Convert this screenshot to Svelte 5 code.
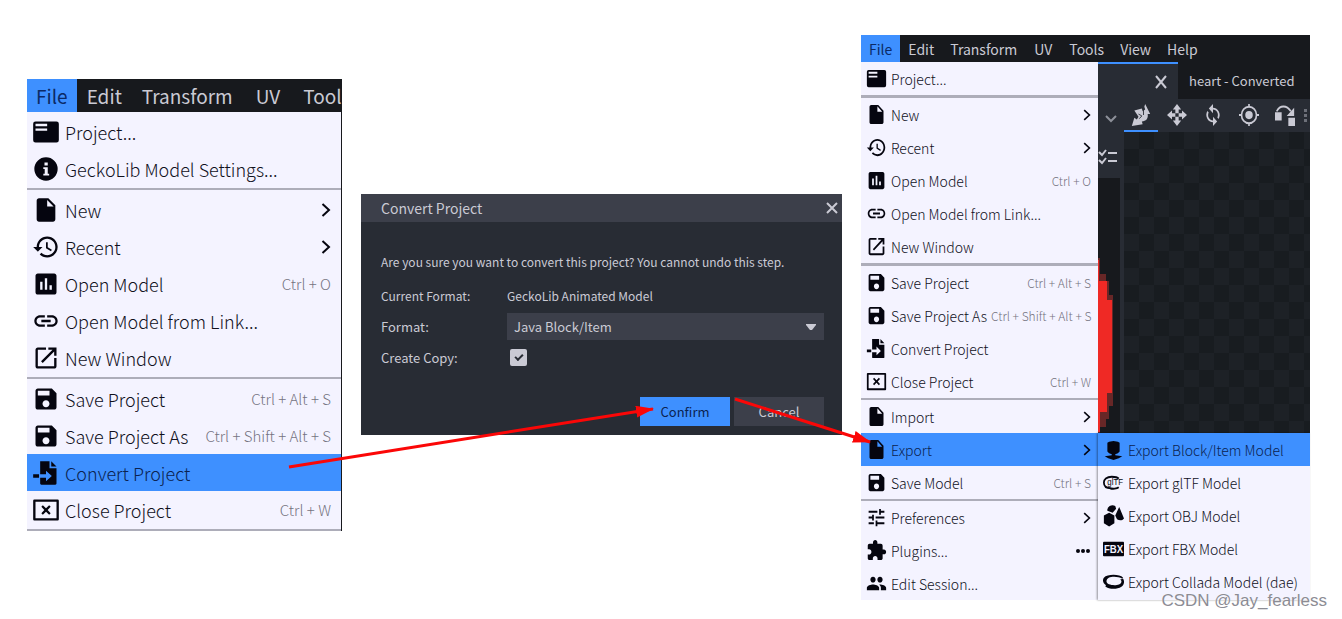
<script lang="ts">
	type Item = {
		icon: string;
		label: string;
		keys?: string;
		more?: 'sub' | 'dots';
		active?: boolean;
		children?: Item[];
	};

	const projectMenu: Item[][] = [
		[
			{ icon: 'project', label: 'Project...' },
			{ icon: 'info', label: 'GeckoLib Model Settings...' }
		],
		[
			{ icon: 'file', label: 'New', more: 'sub' },
			{ icon: 'history', label: 'Recent', more: 'sub' },
			{ icon: 'chart', label: 'Open Model', keys: 'Ctrl + O' },
			{ icon: 'link', label: 'Open Model from Link...' },
			{ icon: 'window', label: 'New Window' }
		],
		[
			{ icon: 'save', label: 'Save Project', keys: 'Ctrl + Alt + S' },
			{ icon: 'save', label: 'Save Project As', keys: 'Ctrl + Shift + Alt + S' },
			{ icon: 'convert', label: 'Convert Project', active: true },
			{ icon: 'close', label: 'Close Project', keys: 'Ctrl + W' }
		]
	];

	const exportMenu: Item[] = [
		{ icon: 'block', label: 'Export Block/Item Model', active: true },
		{ icon: 'gltf', label: 'Export glTF Model' },
		{ icon: 'obj', label: 'Export OBJ Model' },
		{ icon: 'fbx', label: 'Export FBX Model' },
		{ icon: 'collada', label: 'Export Collada Model (dae)' }
	];

	const fileMenu: Item[][] = [
		[{ icon: 'project', label: 'Project...' }],
		projectMenu[1],
		[
			{ icon: 'save', label: 'Save Project', keys: 'Ctrl + Alt + S' },
			{ icon: 'save', label: 'Save Project As', keys: 'Ctrl + Shift + Alt + S' },
			{ icon: 'convert', label: 'Convert Project' },
			{ icon: 'close', label: 'Close Project', keys: 'Ctrl + W' }
		],
		[
			{ icon: 'file', label: 'Import', more: 'sub' },
			{ icon: 'file', label: 'Export', more: 'sub', active: true, children: exportMenu },
			{ icon: 'save', label: 'Save Model', keys: 'Ctrl + S' }
		],
		[
			{ icon: 'tune', label: 'Preferences', more: 'sub' },
			{ icon: 'plugin', label: 'Plugins...', more: 'dots' },
			{ icon: 'group', label: 'Edit Session...' }
		]
	];

	const ICONS: Record<string, string> = {
		project: 'M3 3h18a2 2 0 0 1 2 2v14a2 2 0 0 1-2 2H3a2 2 0 0 1-2-2V5a2 2 0 0 1 2-2zM3 5v2h10V5zM3 9v2h10V9z',
		info: 'M12 2a10 10 0 1 0 0 20 10 10 0 0 0 0-20zM10.700 6.500h2.800V9h-2.800zM9.700 10.500h3.800V16h1.200v1.500H9.700V16h1.200v-4H9.700z',
		file: 'M6 2c-1.100 0-2 .9-2 2v16c0 1.100.9 2 2 2h12c1.100 0 2-.9 2-2V8l-6-6H6zm7 7V3.500L18.500 9H13z',
		history:
			'M13 3c-4.970 0-9 4.030-9 9H1l3.890 3.890.07.14L9 12H6c0-3.870 3.130-7 7-7s7 3.130 7 7-3.130 7-7 7c-1.930 0-3.680-.79-4.940-2.060l-1.420 1.420C8.270 19.990 10.510 21 13 21c4.970 0 9-4.030 9-9s-4.030-9-9-9zm-1 5v5l4.280 2.540.72-1.210-3.500-2.080V8H12z',
		chart:
			'M19 3H5c-1.100 0-2 .9-2 2v14c0 1.100.9 2 2 2h14c1.100 0 2-.9 2-2V5c0-1.100-.9-2-2-2zM9 17H7v-7h2v7zm4 0h-2V7h2v10zm4 0h-2v-4h2v4z',
		link: 'M3.900 12c0-1.710 1.390-3.100 3.100-3.100h4V7H7c-2.760 0-5 2.240-5 5s2.240 5 5 5h4v-1.900H7c-1.710 0-3.100-1.390-3.100-3.100zM8 13h8v-2H8v2zm9-6h-4v1.900h4c1.710 0 3.100 1.390 3.100 3.100s-1.390 3.100-3.100 3.100h-4V17h4c2.760 0 5-2.240 5-5s-2.240-5-5-5z',
		window:
			'M19 19H5V5h7V3H5c-1.110 0-2 .9-2 2v14c0 1.100.89 2 2 2h14c1.100 0 2-.9 2-2v-7h-2v7zM14 3v2h3.590l-9.830 9.830 1.410 1.410L19 6.410V10h2V3h-7z',
		save: 'M17 3H5c-1.110 0-2 .9-2 2v14c0 1.100.89 2 2 2h14c1.100 0 2-.9 2-2V7l-4-4zm-5 16c-1.660 0-3-1.340-3-3s1.340-3 3-3 3 1.340 3 3-1.340 3-3 3zm3-10H5V5h10v4z',
		convert:
			'M7 2h8v6h6v13a1 1 0 0 1-1 1H8a1 1 0 0 1-1-1v-5h5v3l5-4.500-5-4.500v3H7V3zM16.500 2L21 6.500h-4.500zM1 13h5v3H1z',
		close:
			'M2 3h20a1 1 0 0 1 1 1v16a1 1 0 0 1-1 1H2a1 1 0 0 1-1-1V4a1 1 0 0 1 1-1zM3 5v14h18V5zM9.300 8L12 10.600 14.700 8 16 9.300 13.400 12l2.600 2.700-1.300 1.300-2.700-2.600L9.300 16 8 14.700l2.600-2.700L8 9.300z',
		tune: 'M3 17v2h6v-2H3zM3 5v2h10V5H3zm10 16v-2h8v-2h-8v-2h-2v6h2zM7 9v2H3v2h4v2h2V9H7zm14 4v-2H11v2h10zm-6-4h2V7h4V5h-4V3h-2v6z',
		plugin:
			'M20.500 11H19V7c0-1.100-.9-2-2-2h-4V3.500C13 2.120 11.880 1 10.500 1S8 2.120 8 3.500V5H4c-1.100 0-2 .9-2 2v3.800h1.500c1.490 0 2.700 1.210 2.700 2.700s-1.210 2.700-2.700 2.700H2V20c0 1.100.9 2 2 2h3.800v-1.500c0-1.490 1.210-2.700 2.700-2.700s2.700 1.210 2.700 2.700V22H17c1.100 0 2-.9 2-2v-4h1.500c1.380 0 2.500-1.120 2.500-2.500S21.880 11 20.500 11z',
		group:
			'M16 11c1.660 0 3-1.340 3-3s-1.340-3-3-3-3 1.340-3 3 1.340 3 3 3zm-8 0c1.660 0 3-1.340 3-3S9.660 5 8 5 5 6.340 5 8s1.340 3 3 3zm0 2c-2.330 0-7 1.170-7 3.500V19h14v-2.500c0-2.330-4.670-3.500-7-3.500zm8 0c-.29 0-.62.02-.97.05 1.160.84 1.970 1.970 1.970 3.450V19h6v-2.500c0-2.330-4.670-3.500-7-3.500z',
		block: 'M7 4l5-1 5 1 2 1v9l-2 2-3 1v1l8 1-4 2-6 2-6-2-4-2 8-1v-1l-3-1-2-2V5z',
		obj: 'M5 7a6 5 0 0 1 9-5l1 3-4 4zM18.500 3L24 15c-2 2.500-5 2.500-8 1l-2-4zM7 9l6 3v8l-6 3.500L1 20v-8z',
		collada:
			'M1 8C5 4 19 4 23 8l-1 1C16 6 4 6 4 12c0 4.500 16 5.500 17 .5.3-1.500-.7-2-1.500-2.500L23 9c2 3 1 6.500-2 8.500-5 3-14 3-18.500-.5l1-1C0 14-1 10.500 1 8z'
	};

	const shortBar = ['File', 'Edit', 'Transform', 'UV', 'Tool'];
	const fullBar = ['File', 'Edit', 'Transform', 'UV', 'Tools', 'View', 'Help'];
	const tools = ['resize', 'move', 'rotate', 'pivot', 'vertex'];

	let format = $state('Java Block/Item');
	let createCopy = $state(true);
</script>

{#snippet glyph(name: string)}
	<svg class="icon" viewBox="0 0 24 24" preserveAspectRatio="none" aria-hidden="true">
		{#if name === 'gltf'}
			<path d="M9 18C3 18 1 15 1 12s3-6 9-6c4 0 7 1 8 2M8 18c3 1 8 .5 10-1" class="ring" />
			<text x="5" y="15" font-size="9">glTF</text>
		{:else if name === 'fbx'}
			<rect x="0" y="5" width="24" height="15" rx="1" />
			<text x="12" y="17" font-size="11" text-anchor="middle" class="inverse">FBX</text>
		{:else}
			<path d={ICONS[name]} fill-rule="evenodd" />
		{/if}
	</svg>
{/snippet}

{#snippet row(item: Item)}
	<li>
		<button type="button" class="row" class:active={item.active}>
			{@render glyph(item.icon)}
			<span class="label">{item.label}</span>
			{#if item.keys}
				<kbd>{item.keys}</kbd>
			{:else if item.more === 'sub'}
				<svg class="chevron" viewBox="0 0 10 16" aria-hidden="true"><path d="M1.500 2L8 8l-6.500 6" /></svg>
			{:else if item.more === 'dots'}
				<svg class="dots" viewBox="0 0 16 4" aria-hidden="true">
					<circle cx="3" cy="2" r="2" /><circle cx="8" cy="2" r="2" /><circle cx="13" cy="2" r="2" />
				</svg>
			{/if}
		</button>
		{#if item.children}
			<ul class="submenu">
				{#each item.children as child}
					{@render row(child)}
				{/each}
			</ul>
		{/if}
	</li>
{/snippet}

{#snippet menu(groups: Item[][])}
	<div class="menu">
		{#each groups as group}
			<ul>
				{#each group as item}
					{@render row(item)}
				{/each}
			</ul>
		{/each}
	</div>
{/snippet}

{#snippet bar(names: string[])}
	<nav class="bar">
		{#each names as name, i}
			<button type="button" class:open={i === 0} class:wide={name === 'UV'}>{name}</button>
		{/each}
	</nav>
{/snippet}

<main>
	<section class="panel large">
		{@render bar(shortBar)}
		{@render menu(projectMenu)}
	</section>

	<form class="dialog" onsubmit={(e) => e.preventDefault()}>
		<header>
			<h2>Convert Project</h2>
			<button type="button" class="dismiss" aria-label="Close">
				<svg viewBox="0 0 12 12"><path d="M1 1l10 10M11 1L1 11" /></svg>
			</button>
		</header>
		<div class="content">
			<p>Are you sure you want to convert this project? You cannot undo this step.</p>
			<div class="field">
				<span>Current Format:</span>
				<span>GeckoLib Animated Model</span>
			</div>
			<div class="field">
				<label for="format">Format:</label>
				<div class="select">
					<select id="format" bind:value={format}>
						<option>Java Block/Item</option>
						<option>Bedrock Model</option>
					</select>
					<svg viewBox="0 0 10 6" aria-hidden="true"><path d="M0 0h10v1L6 6H4L0 1z" /></svg>
				</div>
			</div>
			<div class="field">
				<label for="copy">Create Copy:</label>
				<input id="copy" type="checkbox" bind:checked={createCopy} />
			</div>
			<footer>
				<button type="submit" class="confirm">Confirm</button>
				<button type="button">Cancel</button>
			</footer>
		</div>
	</form>

	<section class="panel small">
		{@render bar(fullBar)}
		<div class="workspace">
			{@render menu(fileMenu)}
			<div class="editor">
				<div class="tabs">
					<button type="button" class="tab current" aria-label="Close tab">
						<svg viewBox="0 0 12 14" preserveAspectRatio="none"><path d="M1 1l10 12M11 1L1 13" /></svg>
					</button>
					<button type="button" class="tab">heart - Converted</button>
				</div>
				<div class="toolbar">
					<svg class="down" viewBox="0 0 12 8" aria-hidden="true"><path d="M1 1l5 5 5-5" /></svg>
					{#each tools as tool, i}
						<button type="button" class:current={i === 0} aria-label={tool}>
							<svg viewBox="0 0 24 24" preserveAspectRatio="none" aria-hidden="true">
								{#if tool === 'resize'}
									<path d="M17 0l6 11h-3c1 5-2 8-7 8l1 3-13 2 3-9 3 2 2-3-5-7 9-2 1 3 3-2-1-3z" />
									<path d="M9 11l4 2-3 3M15 6v6" class="cut" />
								{:else if tool === 'move'}
									<path d="M12 0l5 6h-3v4h-4V6H7zM12 24l-5-6h3v-4h4v4h3zM0 12l6-5v3h4v4H6v3zM24 12l-6 5v-3h-4v-4h4V7z" />
								{:else if tool === 'rotate'}
									<path d="M12 4V0L7 5l5 5V6a6 6 0 0 1 5.200 8.800l1.500 1.500A8 8 0 0 0 12 4zM12 18a6 6 0 0 1-5.200-8.800L5.300 7.700A8 8 0 0 0 12 20v4l5-5-5-5z" />
								{:else if tool === 'pivot'}
									<circle cx="12" cy="12" r="4.500" />
									<path d="M12 3a9 9 0 1 0 0 18 9 9 0 0 0 0-18zM12 0v3M12 21v3M0 12h3M21 12h3" class="line" />
								{:else}
									<path d="M0 9h8v9H0zM16 15h8v9h-8zM23 4v9h-9z" />
									<path d="M2 8C6 1 14 1 19 8" class="line" />
								{/if}
							</svg>
						</button>
					{/each}
					<svg class="grip" viewBox="0 0 3 14" aria-hidden="true"><path d="M0 0h3v3H0zM0 5h3v3H0zM0 10h3v3H0z" /></svg>
				</div>
				<div class="stage">
					<div class="rail">
						<svg class="checks" viewBox="0 0 20 16" aria-hidden="true">
							<path d="M1 3l3 3 4-5M1 11l3 3 4-5M10 4h9M10 12h9" />
						</svg>
						<div class="slot">
							<svg class="heart" viewBox="0 0 16 180" preserveAspectRatio="none" aria-hidden="true">
								<path d="M0 0h2v16h6v7h3v14h4v111h-4v13H8v8H2v11H0z" fill="#682727" />
								<path d="M0 2h1v21h8v19h5v93h-5v19H2v20H0z" fill="#ef2925" />
							</svg>
						</div>
					</div>
					<div class="checker"></div>
				</div>
			</div>
		</div>
	</section>

	<svg class="arrows" viewBox="0 0 1342 619" aria-hidden="true">
		<defs>
			<marker id="head" markerWidth="18" markerHeight="12" refX="17" refY="6" orient="auto" markerUnits="userSpaceOnUse">
				<path d="M0 0l18 6-18 6z" fill="#fb0707" />
			</marker>
		</defs>
		<line x1="289" y1="467" x2="653" y2="409" marker-end="url(#head)" />
		<line x1="735" y1="399" x2="870" y2="442" marker-end="url(#head)" />
	</svg>
	<span class="watermark">CSDN @Jay_fearless</span>
</main>

<style>
	:global(body) {
		margin: 0;
		background: #fff;
	}

	main {
		position: relative;
		display: grid;
		grid-template-columns: 315fr 481fr 449fr;
		gap: 19px;
		align-items: start;
		padding: 35px 32px 19px 27px;
		font-family: 'Noto Sans CJK SC', 'Noto Sans', sans-serif;
		font-weight: 300;
	}

	button,
	select {
		font: inherit;
		color: inherit;
		border: 0;
		padding: 0;
		margin: 0;
		background: none;
		border-radius: 0;
	}

	ul {
		list-style: none;
		margin: 0;
		padding: 0;
	}

	li {
		position: relative;
	}

	.panel {
		min-width: 0;
	}

	.large {
		--row: 37px;
		--icon-w: 28px;
		--icon-h: 28px;
		--text: 18px;
		--keys: 15px;
		margin-top: 44px;
		overflow: hidden;
	}

	.small {
		--row: 33px;
		--icon-w: 21px;
		--icon-h: 23px;
		--text: 14px;
		--keys: 12px;
	}

	.bar {
		display: flex;
		height: 27px;
		overflow: hidden;
		background: #17191d;
		color: #cacad4;
		font-size: 14px;
		line-height: 26px;
		font-weight: 400;
	}

	.bar button {
		flex: none;
		padding: 0 8px;
	}

	.bar .wide {
		padding: 0 9px;
	}

	.bar .open {
		background: #3e90ff;
		color: #0b2a66;
	}

	.large .bar {
		height: 33px;
		font-size: 19px;
	}

	.large .bar button {
		padding: 0 10px;
	}

	.large .bar .open {
		padding: 0 9px;
	}

	.large .bar .wide {
		padding: 0 13px;
	}

	.menu {
		background: #f4f3ff;
		color: #10101c;
	}

	.large .menu {
		border-right: 1px solid #17191d;
	}

	.large .menu ul {
		border-bottom: 2px solid #adadb9;
		padding: 1px 0;
	}

	.small .menu > ul:not(:last-child) {
		border-bottom: 2px solid #adadb9;
	}

	.small .menu > ul:nth-child(-n + 2) {
		border-bottom-width: 3px;
	}

	.row {
		display: flex;
		align-items: center;
		width: 100%;
		height: var(--row);
		padding: 0 10px 0 5px;
		font-size: var(--text);
		line-height: 24px;
		white-space: nowrap;
		text-align: left;
	}

	.large .row {
		gap: 5px;
	}

	.small .row {
		gap: 4px;
		padding: 0 7px 0 5px;
	}

	.active {
		background: #3e90ff;
		color: #0b2350;
	}

	.label {
		flex: 1;
	}

	kbd {
		font-family: inherit;
		font-size: var(--keys);
		color: #74747f;
	}

	.icon {
		flex: none;
		width: var(--icon-w);
		height: var(--icon-h);
		fill: #05050f;
	}

	.icon text {
		font-family: 'Liberation Sans', sans-serif;
		font-weight: 400;
	}

	.icon .inverse {
		fill: #f4f3ff;
		font-weight: 700;
	}

	.ring {
		fill: none;
		stroke: #05050f;
		stroke-width: 2;
	}

	.chevron {
		width: 10px;
		height: 16px;
		fill: none;
		stroke: #05050f;
		stroke-width: 2;
	}

	.small .chevron {
		width: 8px;
		height: 14px;
	}

	.dots {
		width: 16px;
		height: 4px;
		fill: #05050f;
	}

	.dialog {
		margin-top: 159px;
		background: #282c34;
		color: #cacad4;
		font-size: 12px;
		font-weight: 400;
	}

	.dialog header {
		display: flex;
		align-items: center;
		justify-content: space-between;
		height: 28px;
		padding: 0 4px 0 20px;
		background: #3c3f4a;
	}

	h2 {
		margin: 0;
		font-size: 14px;
		font-weight: 400;
		line-height: 28px;
	}

	.dismiss {
		display: flex;
	}

	.dismiss svg {
		width: 12px;
		height: 12px;
		fill: none;
		stroke: #cacad4;
		stroke-width: 2;
	}

	.content {
		padding: 28px 18px 9px 20px;
	}

	.content p {
		margin: 0 0 6px;
		line-height: 24px;
		white-space: nowrap;
	}

	.field {
		display: grid;
		grid-template-columns: 126px 1fr;
		align-items: center;
		height: 31px;
	}

	.field label {
		font-size: 13px;
	}

	.select {
		position: relative;
		background: #3c3f4a;
	}

	.select select {
		display: block;
		width: 100%;
		height: 27px;
		padding: 0 7px;
		font-size: 13px;
		appearance: none;
	}

	.select svg {
		position: absolute;
		right: 8px;
		top: 11px;
		width: 10px;
		height: 6px;
		fill: #cacad4;
		pointer-events: none;
	}

	.field input {
		appearance: none;
		display: grid;
		place-items: center;
		width: 17px;
		height: 17px;
		margin: 0 3px;
		border-radius: 2px;
		background: #cacad4;
	}

	.field input:checked::before {
		content: '';
		width: 6px;
		height: 3px;
		margin-bottom: 3px;
		border: solid #282c34;
		border-width: 0 0 2px 2px;
		transform: rotate(-45deg);
	}

	.dialog footer {
		display: flex;
		justify-content: flex-end;
		gap: 4px;
		margin-top: 24px;
	}

	.dialog footer button {
		width: 90px;
		height: 29px;
		font-size: 13px;
		background: #3c3f4a;
	}

	.dialog footer .confirm {
		background: #3e90ff;
		color: #0b2350;
	}

	.workspace {
		display: grid;
		grid-template-columns: minmax(0, 237fr) minmax(0, 212fr);
	}

	.submenu {
		position: absolute;
		z-index: 1;
		left: 100%;
		top: 0;
		min-width: 212px;
		padding-bottom: 2px;
		background: #f4f3ff;
		color: #10101c;
		box-shadow: -1px 0 2px #00000066;
	}

	.editor {
		display: flex;
		flex-direction: column;
		overflow: hidden;
		background: #282c34;
		color: #cacad4;
	}

	.tabs {
		display: flex;
		height: 37px;
		background: #17191d;
		font-size: 13px;
		font-weight: 400;
		white-space: nowrap;
	}

	.tab {
		padding: 0 11px;
	}

	.tab.current {
		display: flex;
		flex: none;
		align-items: center;
		justify-content: flex-end;
		width: 80px;
		border-top: 2px solid #3e90ff;
		background: #282c34;
	}

	.tab svg {
		width: 12px;
		height: 14px;
		fill: none;
		stroke: #cacad4;
		stroke-width: 2;
	}

	.toolbar {
		display: flex;
		height: 33px;
	}

	.toolbar button {
		display: flex;
		flex: none;
		align-items: center;
		justify-content: center;
		width: 34px;
		margin-right: 2px;
		border-bottom: 2px solid transparent;
	}

	.toolbar button.current {
		border-bottom-color: #3e90ff;
	}

	.toolbar button svg {
		width: 20px;
		height: 22px;
		fill: #cacad4;
	}

	.toolbar .line {
		fill: none;
		stroke: #cacad4;
		stroke-width: 2;
	}

	.toolbar .cut {
		fill: none;
		stroke: #282c34;
		stroke-width: 1;
	}

	.down {
		flex: none;
		width: 12px;
		height: 8px;
		padding: 16px 7px 0;
		fill: none;
		stroke: #8d9099;
		stroke-width: 2;
	}

	.grip {
		flex: none;
		align-self: center;
		width: 3px;
		height: 14px;
		fill: #6d7079;
	}

	.stage {
		display: grid;
		grid-template-columns: 26px 1fr;
		flex: 1;
	}

	.rail {
		display: flex;
		flex-direction: column;
	}

	.checks {
		width: 20px;
		height: 16px;
		margin: 17px 0 13px;
		fill: none;
		stroke: #cacad4;
		stroke-width: 2;
	}

	.slot {
		flex: 1;
		margin-right: 4px;
		padding-top: 80px;
		background: #17191d;
	}

	.heart {
		display: block;
		width: 16px;
		height: 180px;
	}

	.checker {
		background: repeating-conic-gradient(#181c20 0 25%, #1d2126 0 50%) 0 0 / 30px 34px;
	}

	.arrows {
		position: absolute;
		z-index: 2;
		inset: 0;
		width: 100%;
		height: auto;
		pointer-events: none;
	}

	.arrows line {
		stroke: #fb0707;
		stroke-width: 3;
	}

	.watermark {
		position: absolute;
		z-index: 3;
		right: 15px;
		bottom: 8px;
		font-family: 'Liberation Sans', sans-serif;
		font-size: 17px;
		font-weight: 400;
		line-height: 20px;
		color: #8c8c94;
		text-shadow: 0 0 1px #fff;
	}
</style>
